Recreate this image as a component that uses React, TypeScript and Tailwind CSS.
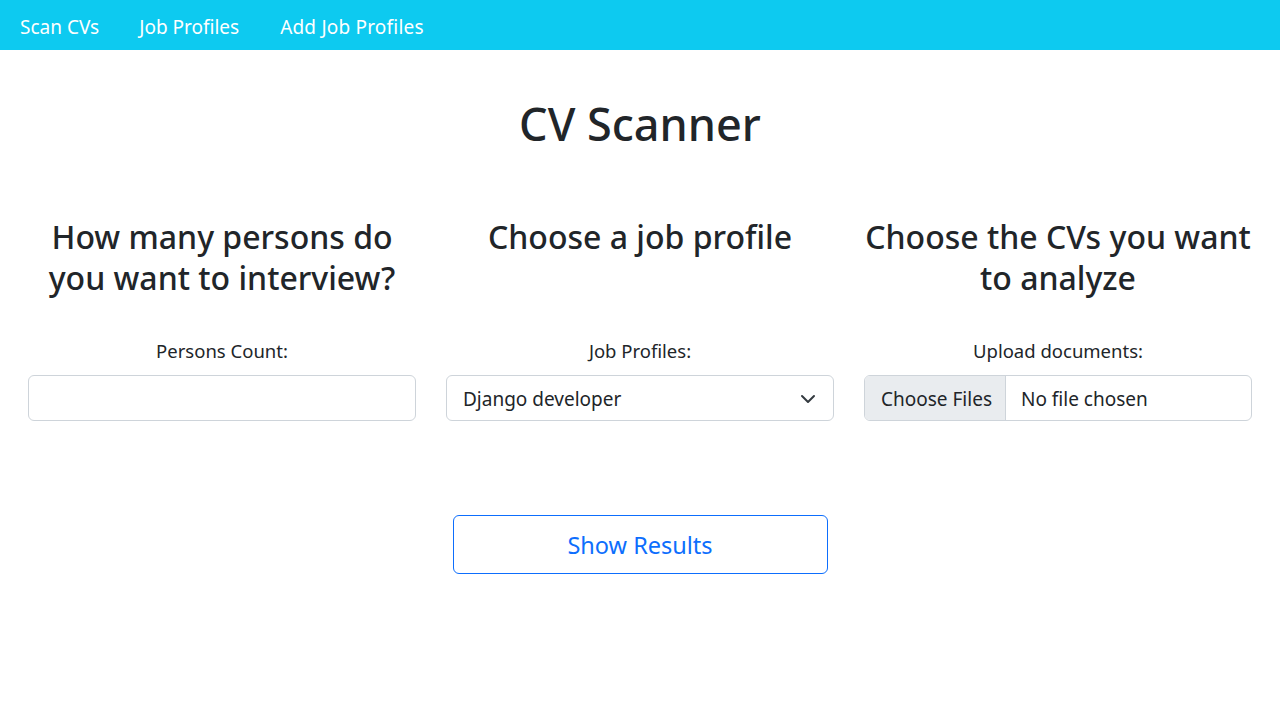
import React from 'react';

const font = { fontFamily: '"Segoe UI", "Noto Sans", "Liberation Sans", sans-serif' };

const App: React.FC = () => {
  return (
    <div className="min-h-[705px] bg-white text-[#212529]" style={font}>
      {/* Navbar */}
      <nav className="h-[50px] bg-[#0dcaf0] flex items-center pt-[3px]">
        <a className="px-5 text-[19px] text-white leading-[30px]" href="#">Scan CVs</a>
        <a className="px-5 text-[19px] text-white leading-[30px]" href="#">Job Profiles</a>
        <a className="pl-[21px] text-[19px] text-white leading-[30px] tracking-[0.2px]" href="#">Add Job Profiles</a>
      </nav>

      <main className="px-[28px]">
        <h1 className="mt-[45px] text-center text-[45px] font-medium leading-[58px]">CV Scanner</h1>

        <div className="mt-[63px] grid grid-cols-3 gap-[30px]">
          {/* Persons count */}
          <div className="flex flex-col">
            <h2 className="h-[82px] text-center text-[32px] font-medium leading-[41px]">
              How many persons do you want to interview?
            </h2>
            <label className="mt-[39px] text-center text-[18.5px] leading-[27px]">Persons Count:</label>
            <input
              type="number"
              className="mt-[11px] h-[46px] w-full rounded-md border border-[#ced4da] px-4 text-[19px] outline-none"
            />
          </div>

          {/* Job profile */}
          <div className="flex flex-col">
            <h2 className="h-[82px] text-center text-[32px] font-medium leading-[41px]">Choose a job profile</h2>
            <label className="mt-[39px] text-center text-[18.5px] leading-[27px]">Job Profiles:</label>
            <div className="mt-[11px] flex h-[46px] w-full items-center justify-between rounded-md border border-[#ced4da] pl-4 pr-[17px] pt-[2px] text-[19px]">
              <span>Django developer</span>
              <svg width="16" height="16" viewBox="0 0 16 16" fill="none">
                <path d="M2 5l6 6 6-6" stroke="#343a40" strokeWidth="2" strokeLinecap="round" strokeLinejoin="round" />
              </svg>
            </div>
          </div>

          {/* Upload */}
          <div className="flex flex-col">
            <h2 className="h-[82px] text-center text-[32px] font-medium leading-[41px]">
              Choose the CVs you want to analyze
            </h2>
            <label className="mt-[39px] text-center text-[18.5px] leading-[27px]">Upload documents:</label>
            <div className="mt-[11px] flex h-[46px] w-full overflow-hidden rounded-md border border-[#ced4da] text-[19px]">
              <span className="flex items-center border-r border-[#ced4da] bg-[#e9ecef] pl-4 pr-[13px] pt-[2px]">Choose Files</span>
              <span className="flex items-center pl-[15px] pt-[2px]">No file chosen</span>
            </div>
          </div>
        </div>

        <div className="mt-[94px] flex justify-center">
          <button className="h-[59px] w-[375px] rounded-md border border-[#0d6efd] pt-[2px] text-[23.5px] text-[#0d6efd]">
            Show Results
          </button>
        </div>
      </main>
    </div>
  );
};

export default App;
